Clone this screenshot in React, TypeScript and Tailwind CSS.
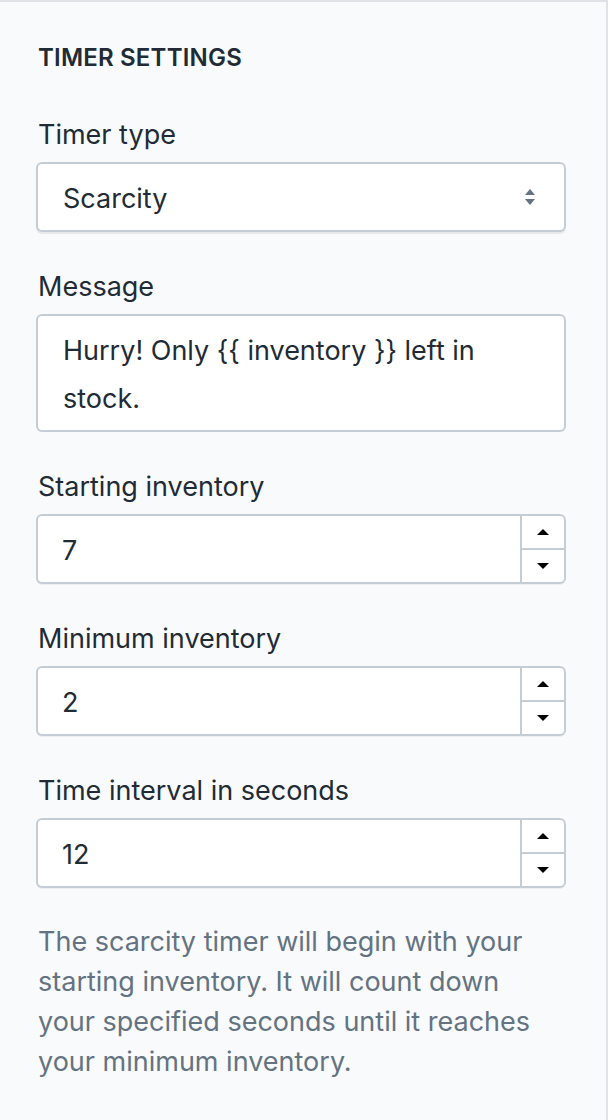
import { useState } from "react";

const font = "font-['Inter','Liberation_Sans',sans-serif]";

function Label({ children }: { children: React.ReactNode }) {
  return <div className="text-[27px] leading-[40px] text-[#212b36] mb-[7px]">{children}</div>;
}

function SelectArrows() {
  return (
    <svg width="12" height="20" viewBox="0 0 12 20" className="text-[#637381]">
      <path d="M6 2 L11 8 L1 8 Z" fill="currentColor" />
      <path d="M1 12 L11 12 L6 18 Z" fill="currentColor" />
    </svg>
  );
}

function NumberField({ value }: { value: string }) {
  const [v, setV] = useState(value);
  return (
    <div className="flex h-[70px] bg-white border-2 border-[#c4cdd5] rounded-[6px] shadow-[0_1px_0_rgba(22,29,37,0.05)] overflow-hidden">
      <input
        value={v}
        onChange={(e) => setV(e.target.value)}
        className="flex-1 min-w-0 px-[24px] pt-[3px] text-[27px] leading-[48px] text-[#212b36] bg-transparent outline-none"
      />
      <div className="w-[44px] flex flex-col border-l-2 border-[#c4cdd5]">
        <button className="flex-1 flex items-center justify-center border-b-2 border-[#c4cdd5]">
          <svg width="12" height="6" viewBox="0 0 12 6">
            <path d="M6 0 L12 6 L0 6 Z" fill="#000" />
          </svg>
        </button>
        <button className="flex-1 flex items-center justify-center">
          <svg width="12" height="6" viewBox="0 0 12 6">
            <path d="M0 0 L12 0 L6 6 Z" fill="#000" />
          </svg>
        </button>
      </div>
    </div>
  );
}

export default function App() {
  const message = "Hurry! Only {{ inventory }} left in stock.";
  return (
    <div className={`${font} min-h-[1120px] bg-[#f9fafb] border-t-2 border-r-2 border-[#dfe3e8] pl-[36px] pr-[40px] pt-[40px]`}>
      <h2 className="text-[24px] leading-[32px] font-semibold uppercase tracking-[0.2px] text-[#212b36] pl-[2px]">Timer settings</h2>

      <div className="mt-[41px] pl-[2px]">
        <Label>Timer type</Label>
      </div>
      <div className="flex items-center h-[70px] bg-white border-2 border-[#c4cdd5] rounded-[6px] shadow-[0_2px_1px_rgba(22,29,37,0.08)] pl-[25px] pr-[28px]">
        <span className="flex-1 pt-[3px] text-[27px] leading-[48px] text-[#212b36]">Scarcity</span>
        <SelectArrows />
      </div>

      <div className="mt-[35px] pl-[2px]">
        <Label>Message</Label>
      </div>
      <div className="h-[118px] bg-white border-2 border-[#c4cdd5] rounded-[6px] pl-[25px] pr-[40px] pt-[11px] pb-[7px] text-[27px] leading-[48px] text-[#212b36]">
        {message}
      </div>

      <div className="mt-[35px] pl-[2px]">
        <Label>Starting inventory</Label>
      </div>
      <NumberField value="7" />

      <div className="mt-[35px] pl-[2px]">
        <Label>Minimum inventory</Label>
      </div>
      <NumberField value="2" />

      <div className="mt-[35px] pl-[2px]">
        <Label>Time interval in seconds</Label>
      </div>
      <NumberField value="12" />

      <p className="mt-[34px] pl-[2px] max-w-[514px] text-[27px] leading-[40px] text-[#637381]">
        The scarcity timer will begin with your starting inventory. It will count down your specified seconds until it reaches your minimum inventory.
      </p>
    </div>
  );
}
